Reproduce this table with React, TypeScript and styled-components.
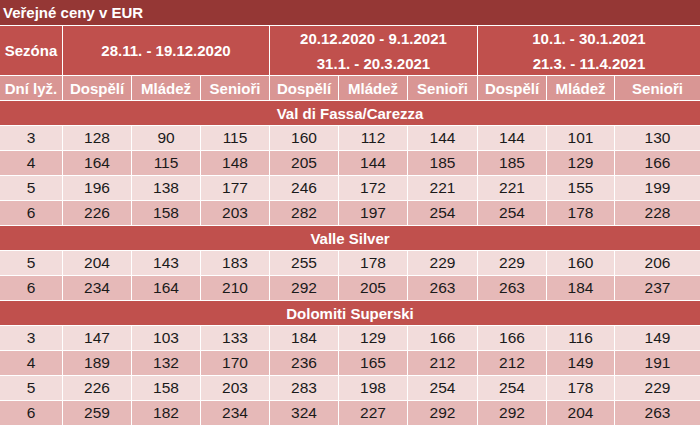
import styled, { createGlobalStyle } from "styled-components"

const GlobalStyle = createGlobalStyle`
	body {
		margin: 0;
		background: #ffffff;
		font-family: "Liberation Sans", Arial, sans-serif;
	}
`

const colors = {
	title: "#953735",
	header: "#c0504d",
	subHeader: "#d99694",
	rowLight: "#f2dcdb",
	rowDark: "#e6b9b8",
	line: "#ffffff",
	text: "#1a1a1a",
}

const seasons = [
	["28.11. - 19.12.2020"],
	["20.12.2020 - 9.1.2021", "31.1. - 20.3.2021"],
	["10.1. - 30.1.2021", "21.3. - 11.4.2021"],
]

const groups = ["Dospělí", "Mládež", "Senioři"]

const resorts = [
	{
		name: "Val di Fassa/Carezza",
		rows: [
			[3, 128, 90, 115, 160, 112, 144, 144, 101, 130],
			[4, 164, 115, 148, 205, 144, 185, 185, 129, 166],
			[5, 196, 138, 177, 246, 172, 221, 221, 155, 199],
			[6, 226, 158, 203, 282, 197, 254, 254, 178, 228],
		],
	},
	{
		name: "Valle Silver",
		rows: [
			[5, 204, 143, 183, 255, 178, 229, 229, 160, 206],
			[6, 234, 164, 210, 292, 205, 263, 263, 184, 237],
		],
	},
	{
		name: "Dolomiti Superski",
		rows: [
			[3, 147, 103, 133, 184, 129, 166, 166, 116, 149],
			[4, 189, 132, 170, 236, 165, 212, 212, 149, 191],
			[5, 226, 158, 203, 283, 198, 254, 254, 178, 229],
			[6, 259, 182, 234, 324, 227, 292, 292, 204, 263],
		],
	},
]

export default function App() {
	return (
		<>
			<GlobalStyle />
			<PriceTable>
				<Title>Veřejné ceny v EUR</Title>

				<HeadCell $rows={2}>Sezóna</HeadCell>
				{seasons.map((lines) => (
					<HeadCell key={lines[0]} $rows={2} $cols={3}>
						{lines.map((line) => (
							<SeasonLine key={line}>{line}</SeasonLine>
						))}
					</HeadCell>
				))}

				<SubHeadCell>Dní lyž.</SubHeadCell>
				{seasons.map((s) =>
					groups.map((g) => <SubHeadCell key={s[0] + g}>{g}</SubHeadCell>)
				)}

				{resorts.map((resort) => (
					<Section key={resort.name} resort={resort} />
				))}
			</PriceTable>
		</>
	)
}

function Section({
	resort,
}: {
	resort: { name: string; rows: number[][] }
}) {
	return (
		<>
			<ResortCell>{resort.name}</ResortCell>
			{resort.rows.map((row, i) =>
				row.map((value, j) => (
					<DataCell key={`${i}-${j}`} $dark={i % 2 === 1}>
						{value}
					</DataCell>
				))
			)}
		</>
	)
}

const PriceTable = styled.div`
	width: 700px;
	display: grid;
	grid-template-columns: 62px 68px 68px 68px 68px 68px 69px 68px 67px 85px;
	grid-template-rows: 25px;
	grid-auto-rows: 24px;
	gap: 1px;
	background: ${colors.line};
`

const Title = styled.div`
	grid-column: 1 / -1;
	display: flex;
	align-items: center;
	padding-left: 3px;
	background: ${colors.title};
	color: #ffffff;
	font-size: 15px;
	font-weight: bold;
`

const HeadCell = styled.div<{ $rows?: number; $cols?: number }>`
	grid-row: span ${({ $rows }) => $rows ?? 1};
	grid-column: span ${({ $cols }) => $cols ?? 1};
	display: flex;
	flex-direction: column;
	align-items: center;
	justify-content: center;
	background: ${colors.header};
	color: #ffffff;
	font-size: 15px;
	font-weight: bold;
`

const SeasonLine = styled.span`
	line-height: 25px;
`

const SubHeadCell = styled.div`
	display: flex;
	align-items: center;
	justify-content: center;
	background: ${colors.subHeader};
	color: #ffffff;
	font-size: 15px;
	font-weight: bold;
	white-space: nowrap;
`

const ResortCell = styled.div`
	grid-column: 1 / -1;
	display: flex;
	align-items: center;
	justify-content: center;
	background: ${colors.header};
	color: #ffffff;
	font-size: 15px;
	font-weight: bold;
`

const DataCell = styled.div<{ $dark: boolean }>`
	display: flex;
	align-items: center;
	justify-content: center;
	background: ${({ $dark }) => ($dark ? colors.rowDark : colors.rowLight)};
	color: ${colors.text};
	font-size: 15.5px;
`
